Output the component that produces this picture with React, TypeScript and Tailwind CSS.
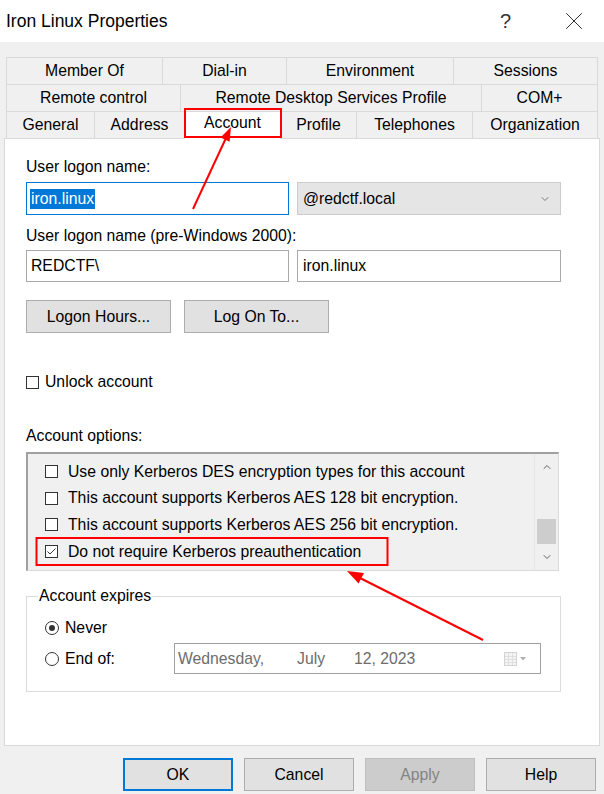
import { ChevronDown, ChevronUp, X } from "lucide-react";

const tabRows: [string, number][][] = [
  [
    ["Member Of", 157],
    ["Dial-in", 124],
    ["Environment", 167],
    ["Sessions", 144],
  ],
  [
    ["Remote control", 175],
    ["Remote Desktop Services Profile", 301],
    ["COM+", 116],
  ],
  [
    ["General", 89],
    ["Address", 90],
    ["Account", 96],
    ["Profile", 76],
    ["Telephones", 116],
    ["Organization", 125],
  ],
];

const options = [
  { label: "Use only Kerberos DES encryption types for this account", checked: false },
  { label: "This account supports Kerberos AES 128 bit encryption.", checked: false },
  { label: "This account supports Kerberos AES 256 bit encryption.", checked: false },
  { label: "Do not require Kerberos preauthentication", checked: true },
];

const CheckBox = ({ checked }: { checked?: boolean }) => (
  <span className="flex h-[13px] w-[13px] shrink-0 items-center justify-center border border-[#333333] bg-white">
    {checked && (
      <svg width="11" height="11" viewBox="0 0 11 11">
        <polyline points="1.5,5.5 4,8 9.5,2.5" fill="none" stroke="#333" strokeWidth="1" />
      </svg>
    )}
  </span>
);

const Radio = ({ checked }: { checked?: boolean }) => (
  <span className="flex h-[14px] w-[14px] shrink-0 items-center justify-center rounded-full border border-[#333333] bg-white">
    {checked && <span className="h-[6px] w-[6px] rounded-full bg-[#333333]" />}
  </span>
);

const DialogButton = ({
  children,
  className = "",
}: {
  children: React.ReactNode;
  className?: string;
}) => (
  <button
    className={`flex h-[33px] items-center justify-center border text-[15.75px] ${className}`}
  >
    {children}
  </button>
);

export default function App() {
  return (
    <div
      className="relative h-[794px] w-[604px] overflow-hidden bg-[#f0f0f0] text-[15.75px] text-black"
      style={{ fontFamily: '"Liberation Sans", Arial, sans-serif' }}
    >
      {/* Title bar */}
      <div className="flex h-[42px] items-center bg-white pl-[6px]">
        <span className="text-[17.5px]">Iron Linux Properties</span>
        <span className="ml-auto mr-[48px] text-[20px] font-light text-[#333]">?</span>
        <X className="mr-[15px] h-[30px] w-[30px] text-[#222]" strokeWidth={0.75} />
      </div>

      {/* Tabs */}
      <div className="mx-[6px] mt-[15px] flex flex-col">
        {tabRows.map((row, ri) => (
          <div key={ri} className="flex">
            {row.map(([name, w], ti) => {
              const active = name === "Account";
              return (
                <div
                  key={name}
                  style={{ width: w }}
                  className={`flex h-[27px] items-center justify-center border-t border-r border-[#d9d9d9] ${
                    ti === 0 ? "border-l" : ""
                  } ${active ? "relative z-10 -mb-px h-[28px] bg-white pb-[5px]" : "bg-[#f0f0f0]"} ${
                    ri === 0 ? "h-[26px]" : ""
                  }`}
                >
                  {name}
                </div>
              );
            })}
          </div>
        ))}
      </div>

      {/* Panel */}
      <div className="mx-[4px] flex h-[608px] flex-col border border-[#d9d9d9] bg-white pl-[21px]">
        <div className="mt-[19px] leading-[18px]">User logon name:</div>
        <div className="mt-[6px] flex gap-[8px]">
          <div className="flex h-[33px] w-[263px] items-center border border-[#0078d7] bg-white pl-[3px]">
            <span className="bg-[#0078d7] px-px leading-[20px] text-white">iron.linux</span>
          </div>
          <div className="flex h-[33px] w-[264px] items-center border border-[#cccccc] bg-[#e5e5e5] pl-[5px] pr-[9px]">
            <span>@redctf.local</span>
            <ChevronDown className="ml-auto h-[12px] w-[12px] text-[#606060]" strokeWidth={1.6} />
          </div>
        </div>

        <div className="mt-[12px] leading-[18px]">User logon name (pre-Windows 2000):</div>
        <div className="mt-[5px] flex gap-[8px]">
          <div className="flex h-[32px] w-[263px] items-center border border-[#a9a9a9] bg-white pl-[4px]">
            REDCTF\
          </div>
          <div className="flex h-[32px] w-[264px] items-center border border-[#a9a9a9] bg-white pl-[5px]">
            iron.linux
          </div>
        </div>

        <div className="mt-[18px] flex gap-[13px]">
          <DialogButton className="w-[145px] border-[#adadad] bg-[#e1e1e1]">Logon Hours...</DialogButton>
          <DialogButton className="w-[145px] border-[#adadad] bg-[#e1e1e1]">Log On To...</DialogButton>
        </div>

        <label className="mt-[40px] flex items-center gap-[6px] leading-[18px]">
          <CheckBox />
          <span>Unlock account</span>
        </label>

        <div className="mt-[36px] leading-[18px]">Account options:</div>

        <div className="mt-[7px] flex h-[119px] w-[533px] border-t-2 border-l-2 border-r border-b border-t-[#a0a0a0] border-l-[#a0a0a0] border-r-[#dadada] border-b-[#dadada] bg-[#f0f0f0]">
          <div className="flex flex-1 flex-col pl-[17px] pt-[4px]">
            {options.map((o) => (
              <div key={o.label} className="flex h-[26.7px] items-center gap-[10px]">
                <CheckBox checked={o.checked} />
                <span>{o.label}</span>
              </div>
            ))}
          </div>
          <div className="flex w-[24px] flex-col border-l border-[#e6e6e6]">
            <div className="flex h-[26px] items-center justify-center">
              <ChevronUp className="h-[12px] w-[12px] text-[#606060]" strokeWidth={2} />
            </div>
            <div className="h-[39px]" />
            <div className="mx-[2px] h-[25px] bg-[#cdcdcd]" />
            <div className="flex h-[26px] items-center justify-center">
              <ChevronDown className="h-[12px] w-[12px] text-[#606060]" strokeWidth={2} />
            </div>
          </div>
        </div>

        <fieldset className="mt-[16px] h-[105px] w-[535px] border border-[#dcdcdc] pl-[18px]">
          <legend className="-ml-[7px] px-px leading-[18px]">Account expires</legend>
          <label className="mt-[14px] flex items-center gap-[6px] leading-[18px]">
            <Radio checked />
            <span>Never</span>
          </label>
          <div className="mt-[6px] flex h-[31px] items-center">
            <label className="flex w-[129px] items-center gap-[6px]">
              <Radio />
              <span>End of:</span>
            </label>
            <div className="flex h-[31px] w-[367px] items-center border border-[#a0a0a0] bg-white pl-[3px] text-[#6d6d6d]">
              <span className="inline-block w-[119px]">Wednesday,</span>
              <span className="inline-block w-[57px]">July</span>
              <span>12, 2023</span>
              <span className="ml-auto mr-[14px] flex items-center gap-[3px]">
                <svg width="13" height="14" viewBox="0 0 13 14">
                  <rect x="0.5" y="0.5" width="12" height="13" fill="#f4f4f4" stroke="#d4d4d4" />
                  <path d="M4.5 1v12M8.5 1v12M1 4.5h11M1 7.5h11M1 10.5h11" stroke="#e0e0e0" strokeWidth="1" />
                </svg>
                <svg width="6" height="4" viewBox="0 0 6 4">
                  <polygon points="0,0 6,0 3,3.5" fill="#b0b0b0" />
                </svg>
              </span>
            </div>
          </div>
        </fieldset>
      </div>

      {/* Bottom buttons */}
      <div className="mt-[12px] flex justify-end gap-[11px] pr-[8px]">
        <DialogButton className="w-[110px] border-2 border-[#0078d7] bg-[#e1e1e1]">OK</DialogButton>
        <DialogButton className="w-[110px] border-[#adadad] bg-[#e1e1e1]">Cancel</DialogButton>
        <DialogButton className="w-[110px] border-[#bfbfbf] bg-[#cccccc] text-[#838383]">Apply</DialogButton>
        <DialogButton className="w-[110px] border-[#adadad] bg-[#e1e1e1]">Help</DialogButton>
      </div>

      {/* Red annotations */}
      <svg
        className="pointer-events-none absolute left-0 top-0 z-20"
        width="604"
        height="794"
        viewBox="0 0 604 794"
      >
        <rect x="185" y="109" width="96" height="28" fill="none" stroke="#ff0000" strokeWidth="2" />
        <rect x="36.5" y="538" width="351" height="27" fill="none" stroke="#ff0000" strokeWidth="2" />
        <line x1="193" y1="209" x2="226" y2="138" stroke="#ff0000" strokeWidth="2" />
        <polygon points="231,127 229.6,141.8 220.6,137.6" fill="#ff0000" />
        <line x1="483" y1="640" x2="360" y2="578" stroke="#ff0000" strokeWidth="2" />
        <polygon points="347,571 364,572.9 358.6,583.6" fill="#ff0000" />
      </svg>
    </div>
  );
}
